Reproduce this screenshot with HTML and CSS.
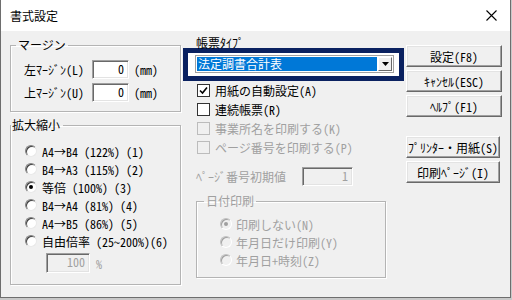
FILE: index.html
```html
<!DOCTYPE html>
<html lang="ja">
<head>
  <meta charset="UTF-8">
  <title>書式設定</title>
  <link rel="stylesheet" href="styles.css">
</head>
<body>

  <div class="dialog">
    <!-- タイトルバー -->
    <div class="titlebar">
      <span class="title">書式設定</span>
      <svg class="close" width="11" height="11" viewBox="0 0 11 11">
        <path d="M0.5 0.5 L10.5 10.5 M10.5 0.5 L0.5 10.5" stroke="#000" stroke-width="1.1" fill="none"/>
      </svg>
    </div>

    <div class="content">
      <!-- 左側 -->
      <div class="col-left">
        <fieldset class="group group-margin">
          <legend>マージン</legend>
          <div class="margin-row">
            <span class="margin-label">左ﾏｰｼﾞﾝ(L)</span>
            <span class="field">0</span>
            <span class="unit">(mm)</span>
          </div>
          <div class="margin-row">
            <span class="margin-label">上ﾏｰｼﾞﾝ(U)</span>
            <span class="field">0</span>
            <span class="unit">(mm)</span>
          </div>
        </fieldset>

        <fieldset class="group group-scale">
          <legend>拡大縮小</legend>
          <div class="radio-row"><span class="radio"></span><span>A4→B4 (122%) (1)</span></div>
          <div class="radio-row"><span class="radio"></span><span>B4→A3 (115%) (2)</span></div>
          <div class="radio-row"><span class="radio checked"></span><span>等倍 (100%) (3)</span></div>
          <div class="radio-row"><span class="radio"></span><span>B4→A4 (81%) (4)</span></div>
          <div class="radio-row"><span class="radio"></span><span>A4→B5 (86%) (5)</span></div>
          <div class="radio-row"><span class="radio"></span><span>自由倍率 (25～200%)(6)</span></div>
          <div class="free-row">
            <span class="field field-disabled">100</span>
            <span class="percent">%</span>
          </div>
        </fieldset>
      </div>

      <!-- 中央 -->
      <div class="col-mid">
        <div class="type-label">帳票ﾀｲﾌﾟ</div>
        <div class="focus-frame">
          <div class="combo">
            <span class="combo-value">法定調書合計表</span>
            <span class="combo-btn">
              <svg width="7" height="4" viewBox="0 0 7 4"><path d="M0 0 H7 L3.5 4 Z" fill="#000"/></svg>
            </span>
          </div>
        </div>

        <div class="check-row">
          <span class="check">
            <svg width="9" height="9" viewBox="0 0 9 9"><path d="M1 4.5 L3.5 7 L8 1.5" stroke="#000" stroke-width="1.6" fill="none"/></svg>
          </span>
          <span>用紙の自動設定(A)</span>
        </div>
        <div class="check-row">
          <span class="check"></span>
          <span>連続帳票(R)</span>
        </div>
        <div class="check-row disabled">
          <span class="check"></span>
          <span>事業所名を印刷する(K)</span>
        </div>
        <div class="check-row disabled">
          <span class="check"></span>
          <span>ページ番号を印刷する(P)</span>
        </div>

        <div class="page-row disabled">
          <span class="page-label">ﾍﾟｰｼﾞ番号初期値</span>
          <span class="field field-disabled field-page">1</span>
        </div>

        <fieldset class="group group-date disabled">
          <legend>日付印刷</legend>
          <div class="radio-row"><span class="radio checked"></span><span>印刷しない(N)</span></div>
          <div class="radio-row"><span class="radio"></span><span>年月日だけ印刷(Y)</span></div>
          <div class="radio-row"><span class="radio"></span><span>年月日＋時刻(Z)</span></div>
        </fieldset>
      </div>

      <!-- ボタン -->
      <div class="col-right">
        <button class="btn">設定(F8)</button>
        <button class="btn">ｷｬﾝｾﾙ(ESC)</button>
        <button class="btn">ﾍﾙﾌﾟ(F1)</button>
        <button class="btn btn-narrow btn-gap">ﾌﾟﾘﾝﾀｰ・用紙(S)</button>
        <button class="btn btn-narrow">印刷ﾍﾟｰｼﾞ(I)</button>
      </div>
    </div>
  </div>

</body>
</html>
```

FILE: styles.css
```css
* {
  margin: 0;
  padding: 0;
  box-sizing: border-box;
}

body {
  width: 512px;
  height: 300px;
  overflow: hidden;
  background: #c8c8c8;
  font-family: "Noto Sans CJK JP", "Noto Sans", sans-serif;
  font-size: 12px;
  font-feature-settings: "hwid";
  color: #000;
}

.dialog {
  width: 511px;
  height: 298px;
  background: #f0f0f0;
  border: 1px solid #6e6e6e;
  border-top: none;
}

/* Title bar */
.titlebar {
  height: 31px;
  background: #fff;
  display: flex;
  align-items: center;
  justify-content: space-between;
  padding: 0 13px 0 9px;
}

.title {
  font-size: 12px;
  line-height: 14px;
}

.content {
  display: flex;
  padding: 7px 0 0 9px;
}

/* Group boxes */
.group {
  border: 1px solid #b4b4b4;
  box-shadow: inset 1px 1px 0 #fff, 1px 1px 0 #fff;
}

.group legend {
  line-height: 14px;
  padding: 0 2px;
}

.col-left {
  width: 171px;
}

.group-margin {
  padding: 8px 0 9px 13px;
}

.group-margin legend {
  margin-left: -8px;
}

.margin-row {
  display: flex;
  align-items: center;
  height: 19px;
}

.margin-row + .margin-row {
  margin-top: 4px;
}

.margin-label {
  width: 68px;
}

.unit {
  margin-left: 5px;
}

.field {
  display: block;
  width: 37px;
  height: 19px;
  background: #fff;
  border: 1px solid;
  border-color: #a0a0a0 #fff #fff #a0a0a0;
  box-shadow: inset 1px 1px 0 #696969, inset -1px -1px 0 #e3e3e3;
  text-align: right;
  padding-right: 4px;
  line-height: 16px;
}

.field-disabled {
  background: #f0f0f0;
  color: #a0a0a0;
}

.group-scale {
  margin-top: 6px;
  padding: 10px 0 11px 14px;
}

.group-scale legend {
  margin-left: -14px;
  padding: 0 3px 0 1px;
}

.radio-row {
  display: flex;
  align-items: center;
  height: 18px;
}

.radio {
  width: 12px;
  height: 12px;
  border-radius: 50%;
  background: #fff;
  border: 1px solid;
  border-color: #808080 #e8e8e8 #e8e8e8 #808080;
  box-shadow: inset 1px 1px 0 #404040;
  margin-right: 5px;
  position: relative;
}

.radio.checked::after {
  content: "";
  position: absolute;
  left: 3px;
  top: 3px;
  width: 4px;
  height: 4px;
  border-radius: 50%;
  background: #000;
}

.free-row {
  display: flex;
  align-items: center;
  margin: 3px 0 0 21px;
}

.free-row .field {
  width: 44px;
  height: 20px;
}

.percent {
  margin-left: 6px;
  color: #a0a0a0;
}

/* Middle column */
.col-mid {
  width: 221px;
  margin-left: 2px;
}

.type-label {
  padding-left: 13px;
  height: 10px;
  line-height: 10px;
}

.focus-frame {
  width: 221px;
  height: 33px;
  border: 5px solid #0a2160;
  background: #fff;
  padding: 2px 5px 3px 7px;
}

.combo {
  display: flex;
  height: 18px;
  background: #fff;
  border: 1px solid #a0a0a0;
  padding: 1px;
}

.combo-value {
  flex: 1;
  background: #0078d7;
  color: #fff;
  line-height: 14px;
  padding-left: 1px;
  margin-right: 1px;
}

.combo-btn {
  width: 14px;
  display: flex;
  align-items: center;
  justify-content: center;
  background: #f0f0f0;
  border: 1px solid;
  border-color: #fff #696969 #696969 #fff;
}

.check-row {
  display: flex;
  align-items: center;
  height: 19px;
  padding-left: 14px;
}

.check {
  width: 13px;
  height: 13px;
  background: #fff;
  border: 1px solid #333;
  margin-right: 5px;
  display: flex;
  align-items: center;
  justify-content: center;
}

.disabled {
  color: #a0a0a0;
}

.disabled .check {
  background: #f0f0f0;
  border-color: #bcbcbc;
}

.page-row {
  display: flex;
  align-items: center;
  margin-top: 10px;
  padding-left: 13px;
}

.page-label {
  width: 106px;
}

.field-page {
  width: 51px;
}

.group-date {
  margin: 8px 0 0 13px;
  width: 190px;
  padding: 7px 0 8px 23px;
}

.group-date legend {
  margin-left: -16px;
}

.group-date .radio {
  background: #f0f0f0;
  border-color: #c0c0c0 #fff #fff #c0c0c0;
  box-shadow: inset 1px 1px 0 #a0a0a0;
  margin-right: 4px;
}

.group-date .radio.checked::after {
  background: #a0a0a0;
}

/* Buttons */
.col-right {
  margin-left: 2px;
  padding-top: 7px;
  display: flex;
  flex-direction: column;
  gap: 3px;
}

.btn {
  width: 96px;
  height: 22px;
  font: inherit;
  background: #f0f0f0;
  border: 1px solid;
  border-color: #fff #696969 #696969 #fff;
  box-shadow: inset -1px -1px 0 #a0a0a0, inset 1px 1px 0 #e3e3e3;
  color: #000;
}

.btn-narrow {
  width: 94px;
}

.btn-gap {
  margin-top: 16px;
}
```
